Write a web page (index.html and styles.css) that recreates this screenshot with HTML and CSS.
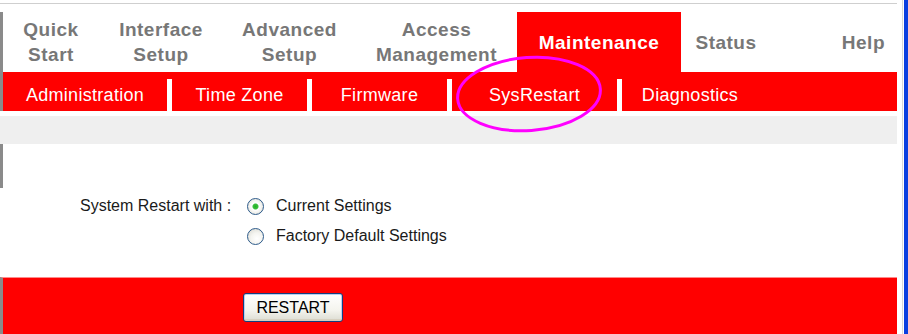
FILE: index.html
```html
<!DOCTYPE html>
<html>
<head>
<title>Maintenance - SysRestart</title>
<link rel="stylesheet" href="styles.css">
</head>
<body>

<div class="window">
	<div class="page">
		<div class="topline"></div>

		<div class="tabs">
			<div class="tab w-quick">Quick<br>Start</div>
			<div class="tab w-iface">Interface<br>Setup</div>
			<div class="tab w-adv">Advanced<br>Setup</div>
			<div class="tab w-access">Access<br>Management</div>
			<div class="tab w-maint active">Maintenance</div>
			<div class="tab w-status">Status</div>
			<div class="tab w-help">Help</div>
		</div>

		<div class="subnav">
			<div class="subitem w-admin">Administration</div>
			<span class="sep"></span>
			<div class="subitem w-tz">Time Zone</div>
			<span class="sep"></span>
			<div class="subitem w-fw">Firmware</div>
			<span class="sep"></span>
			<div class="subitem w-sys">SysRestart</div>
			<span class="sep"></span>
			<div class="subitem w-diag">Diagnostics</div>
		</div>

		<div class="gap"></div>
		<div class="band"></div>

		<div class="content">
			<div class="leftrule"></div>
			<div class="form">
				<div class="row">
					<span class="label">System Restart with :</span>
					<label class="opt"><input type="radio" name="restart" checked> Current Settings</label>
				</div>
				<div class="row">
					<span class="label hidden">System Restart with :</span>
					<label class="opt"><input type="radio" name="restart"> Factory Default Settings</label>
				</div>
			</div>
		</div>

		<div class="actions">
			<button type="button" class="xpbutton">RESTART</button>
		</div>

		<!-- annotation round the selected sub menu -->
		<svg class="mark" width="156" height="86" viewBox="0 0 156 86">
			<ellipse cx="76" cy="41" rx="71.5" ry="36.5" fill="none" stroke="#ff00ff" stroke-width="3" transform="rotate(-4 76 41)"/>
		</svg>
	</div>

	<div class="edge">
		<span class="edgeline"></span>
		<span class="blue"></span>
	</div>
</div>

</body>
</html>
```

FILE: styles.css
```css
html, body {
  margin: 0;
  padding: 0;
  background-color: white;
}

body {
  width: 908px;
  height: 334px;
  overflow: hidden;
  font-family: "Liberation Sans", Arial, sans-serif;
}

.window {
  display: flex;
  height: 334px;
}

.page {
  position: relative;
  width: 898px;
}

.topline {
  margin-top: 3px;
  border-top: 1px solid #cfcfcf;
  margin-right: 1px;
}

/* main tabs */
.tabs {
  display: flex;
  margin-top: 8px;
  height: 60px;
  border-left: 3px solid #8a8a8a;
}

.tab {
  display: flex;
  align-items: center;
  justify-content: center;
  text-align: center;
  font-size: 19px;
  font-weight: bold;
  line-height: 25px;
  letter-spacing: 0.5px;
  color: #777777;
}

.tab.active {
  background-color: #ff0000;
  color: white;
}

.w-quick { width: 96px; }
.w-iface { width: 124px; }
.w-adv { width: 133px; }
.w-access { width: 161px; }
.w-maint { width: 164px; }
.w-status { width: 90px; }
.w-help {
  width: 127px;
  justify-content: flex-end;
  padding-right: 13px;
  box-sizing: border-box;
}

/* sub menu */
.subnav {
  display: flex;
  height: 39px;
  background-color: #ff0000;
  border-left: 3px solid #8a8a8a;
  margin-right: 1px;
}

.subitem {
  padding-top: 7px;
  box-sizing: border-box;
  height: 39px;
  line-height: 32px;
  text-align: center;
  font-size: 18px;
  letter-spacing: 0.3px;
  color: white;
}

.w-admin { width: 164px; }
.w-tz { width: 135px; }
.w-fw { width: 135px; }
.w-sys { width: 165px; }
.w-diag { width: 136px; }

.sep {
  align-self: flex-end;
  width: 5px;
  height: 32px;
  background-color: white;
}

.gap {
  height: 5px;
}

.band {
  height: 28px;
  background-color: #efefef;
  margin-right: 1px;
}

/* form */
.content {
  display: flex;
  height: 133px;
}

.leftrule {
  width: 3px;
  height: 44px;
  background-color: #8a8a8a;
}

.form {
  padding-top: 47px;
  padding-left: 77px;
}

.row {
  display: flex;
  align-items: center;
  height: 30px;
  font-size: 16px;
  color: #1a1a1a;
}

.label {
  width: 167px;
}

.hidden {
  visibility: hidden;
}

.opt {
  display: flex;
  align-items: center;
}

.opt input {
  appearance: none;
  -webkit-appearance: none;
  margin: 0 12px 0 0;
  width: 17px;
  height: 17px;
  border: 1px solid #2c5a8a;
  border-radius: 50%;
  box-sizing: border-box;
  background: radial-gradient(circle at 60% 65%, #ffffff 0%, #f4f4f0 45%, #d4d4cc 100%);
}

.opt input:checked {
  background: radial-gradient(circle, #22b022 0, #3cbf3c 2.5px, #ffffff 3.5px, #f4f4f0 55%, #d4d4cc 100%);
}

/* restart bar */
.actions {
  height: 57px;
  background-color: #ff0000;
  border-left: 3px solid #8a8a8a;
  border-top: 1px solid #ff8a8a;
  margin-right: 1px;
  padding-top: 15px;
  padding-left: 240px;
  box-sizing: border-box;
}

.xpbutton {
  width: 100px;
  height: 29px;
  border: 1px solid #123f80;
  border-radius: 3px;
  background: linear-gradient(#ffffff, #f4f4ee 60%, #dcdcd2);
  box-shadow: inset 0 -2px 0 #d6d0c0, inset 0 0 0 1px #b9cff0;
  font-family: "Liberation Sans", Arial, sans-serif;
  font-size: 16px;
  color: #000;
  padding: 0;
}

.mark {
  position: absolute;
  left: 453px;
  top: 53px;
}

/* window border on the right */
.edge {
  display: flex;
  width: 10px;
}

.edgeline {
  margin-left: 4px;
  width: 1px;
  background-color: #d8d8d8;
}

.blue {
  margin-left: 1px;
  width: 4px;
  background-color: #0a3fe0;
}
```
